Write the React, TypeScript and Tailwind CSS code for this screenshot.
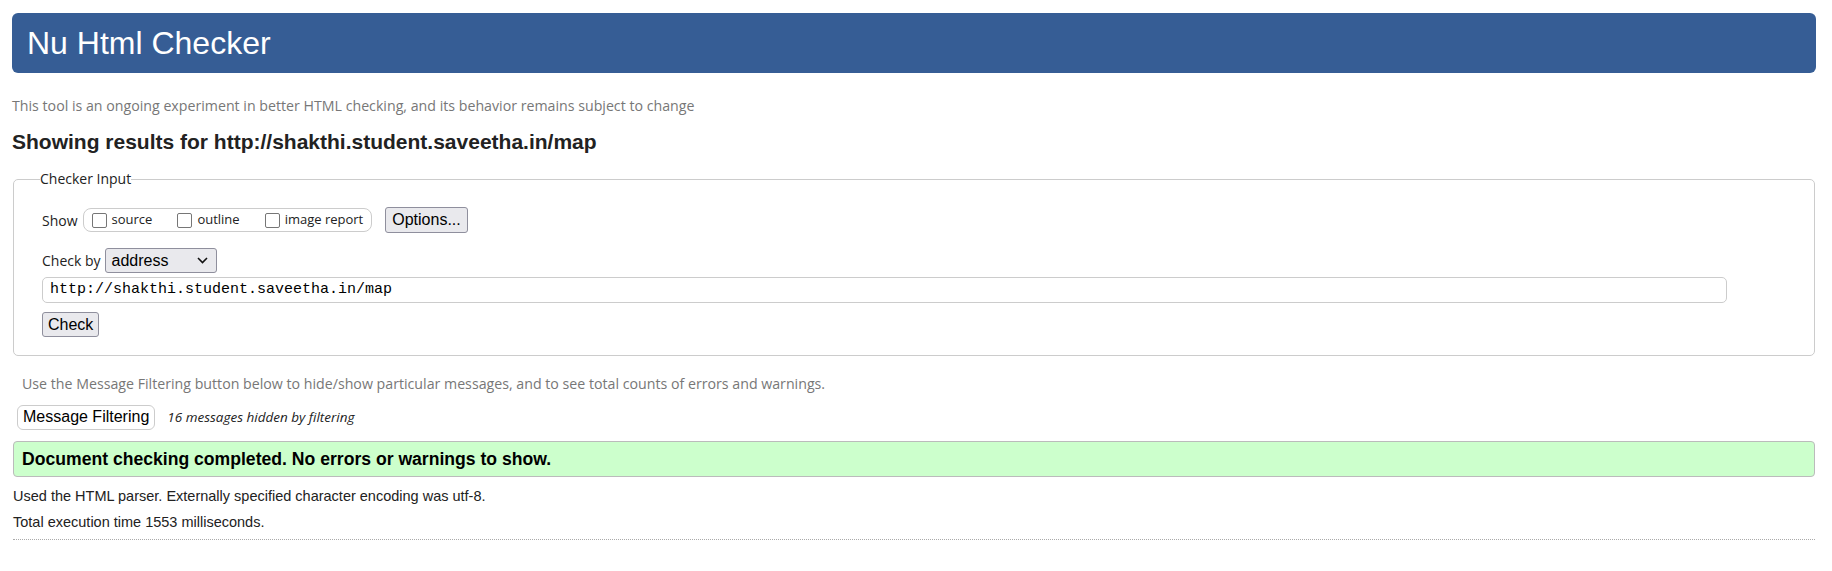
import React from 'react';

const arial = "font-['Liberation_Sans',Arial,sans-serif]";
const ui = "font-['Open_Sans','Noto_Sans',sans-serif]";

const Checkbox: React.FC<{ label: string }> = ({ label }) => (
  <label className="flex items-center gap-[5px]">
    <span className="w-[15px] h-[15px] rounded-[2px] border border-[#767676] bg-white" />
    <span className="text-[13px] text-[#222]">{label}</span>
  </label>
);

const App: React.FC = () => {
  return (
    <div className={`${arial} bg-white min-h-[571px] pl-[12px] pr-[16px] pt-[13px] text-[#222]`}>
      <header className="h-[60px] bg-[#365d95] rounded-[6px] flex items-center px-[15px]">
        <h1 className="text-white text-[32px] leading-[32px]">Nu Html Checker</h1>
      </header>

      <p className={`${ui} mt-[24px] h-[18px] leading-[18px] text-[14.2px] text-[#777]`}>
        This tool is an ongoing experiment in better HTML checking, and its behavior remains subject to change
      </p>

      <h2 className="mt-[15px] h-[24px] leading-[24px] text-[21px] font-bold text-[#222]">
        Showing results for http://shakthi.student.saveetha.in/map
      </h2>

      <fieldset className="mt-[15px] ml-[1px] mr-[1px] border border-[#ccc] rounded-[5px] pl-[28px] pr-[10px] pt-[19px] pb-[18px]">
        <legend className={`${ui} ml-[-2px] text-[14px] leading-[20px] text-[#222]`}>Checker Input</legend>

        <div className={`${ui} flex items-center h-[24px] text-[14px]`}>
          <span className="mr-[5px]">Show</span>
          <div className="flex items-center gap-[25px] h-[24px] border border-[#ccc] rounded-[8px] pl-[8px] pr-[8px]">
            <Checkbox label="source" />
            <Checkbox label="outline" />
            <Checkbox label="image report" />
          </div>
          <button
            className={`${arial} ml-[13px] h-[26px] px-[6px] bg-[#e9e9ed] border border-[#8f8f9d] rounded-[3px] text-[16px] text-black`}
          >
            Options...
          </button>
        </div>

        <div className={`${ui} mt-[16px] flex items-center h-[25px] text-[14px]`}>
          <span className="mr-[4px]">Check by</span>
          <div
            className={`${arial} w-[112px] h-[25px] flex items-center justify-between pl-[6px] pr-[8px] bg-[#e9e9ed] border border-[#8f8f9d] rounded-[3px] text-[16px] text-black`}
          >
            <span>address</span>
            <svg width="11" height="7" viewBox="0 0 11 7" fill="none">
              <path d="M1 1l4.5 4.5L10 1" stroke="#111" strokeWidth="1.6" />
            </svg>
          </div>
        </div>

        <div className="mt-[4px] w-[1685px] h-[26px] flex items-center pl-[7px] border border-[#ccc] rounded-[5px] font-['Liberation_Mono',monospace] text-[15px] text-black">
          http://shakthi.student.saveetha.in/map
        </div>

        <button className="mt-[9px] h-[25px] px-[5px] bg-[#e9e9ed] border border-[#8f8f9d] rounded-[3px] text-[16px] leading-[20px] text-black">
          Check
        </button>
      </fieldset>

      <p className={`${ui} mt-[19px] ml-[10px] h-[18px] leading-[18px] text-[14.2px] text-[#777]`}>
        Use the Message Filtering button below to hide/show particular messages, and to see total counts of errors and warnings.
      </p>

      <div className="mt-[12px] ml-[5px] flex items-center h-[24px]">
        <button className="h-[25px] px-[5px] bg-white border border-[#ccc] rounded-[6px] text-[16px] leading-[20px] text-black">
          Message Filtering
        </button>
        <span className={`${ui} ml-[12px] italic text-[13.5px] text-[#222]`}>16 messages hidden by filtering</span>
      </div>

      <div className="mt-[12px] ml-[1px] mr-[1px] h-[36px] flex items-center pl-[8px] bg-[#ccffcc] border border-[#bbb] rounded-[4px]">
        <p className="text-[17.6px] font-bold text-black">Document checking completed. No errors or warnings to show.</p>
      </div>

      <p className="mt-[10px] ml-[1px] h-[18px] leading-[18px] text-[14.5px] text-[#222]">
        Used the HTML parser. Externally specified character encoding was utf-8.
      </p>
      <p className="mt-[8px] ml-[1px] h-[18px] leading-[18px] text-[14.5px] text-[#222]">
        Total execution time 1553 milliseconds.
      </p>
      <div className="mt-[8px] ml-[1px] mr-[1px] border-t border-dotted border-[#aaa]" />
    </div>
  );
};

export default App;
